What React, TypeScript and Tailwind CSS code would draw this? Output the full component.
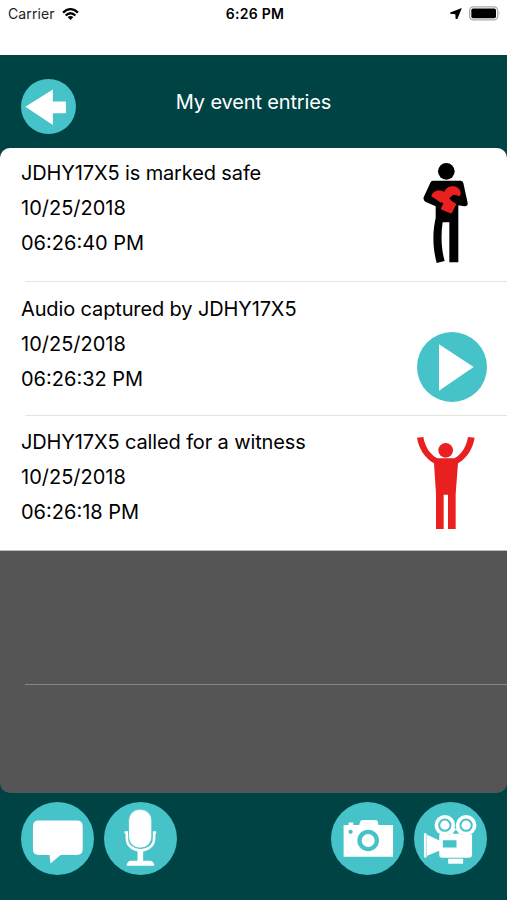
import React from 'react';

function BackIcon() {
  return (
    <svg viewBox="0 0 164 164" className="w-[55px] h-[55px]">
      <circle cx="82" cy="82" r="82" fill="#45c3c9" />
      <path d="M13 83 L95 31 V67 H134 V102 H95 V137 Z" fill="#fff" />
    </svg>
  );
}

function SafeIcon() {
  return (
    <svg viewBox="51 37 210 306" className="w-[70px] h-[102px]">
      <circle cx="139" cy="65" r="25" fill="#000" />
      <path d="M99 93 H182 Q188 93 190 100 L203 160 Q204 171 193 170 L175 167 V338 H148 V218 H128 C122 255 124 300 134 334 L110 340 C98 295 97 248 107 205 V170 L76 156 Q69 151 71 143 L91 99 Q93 93 99 93 Z" fill="#000" />
      <path d="M94 140 C97 122 121 118 133 127 C139 105 176 103 182 127 C183 139 177 143 171 137 L160 135 L148 146 L154 153 L169 163 L156 189 Q153 192 149 190 L122 179 L130 160 L120 158 L103 146 Z" fill="#e8201f" />
    </svg>
  );
}

function PlayIcon() {
  return (
    <svg viewBox="51 37 210 210" className="w-[70px] h-[70px]">
      <circle cx="156" cy="142" r="105" fill="#45c3c9" />
      <path d="M117 74 L221 142 L117 213 Z" fill="#fff" />
    </svg>
  );
}

function WitnessIcon() {
  return (
    <svg viewBox="51 37 210 279" className="w-[70px] h-[93px]" fill="#e8201f">
      <circle cx="137" cy="77" r="22" />
      <path d="M51 39 L70 37 C75 65 89 89 112 101 H163 C186 89 199 65 204 37 L224 39 C218 73 202 99 174 116 L167 208 V313 H144 V210 H131 V313 H108 V208 L102 116 C74 99 57 73 51 39 Z" />
    </svg>
  );
}

function MessageIcon() {
  return (
    <svg viewBox="62 66 220 220" className="w-[73px] h-[73px]">
      <circle cx="172" cy="176" r="110" fill="#45c3c9" />
      <path d="M115 122 H230 Q248 122 248 140 V208 Q248 226 230 226 H181 L151 251 L148 226 H115 Q98 226 98 208 V140 Q98 122 115 122 Z" fill="#fff" />
    </svg>
  );
}

function MicIcon() {
  return (
    <svg viewBox="311 66 220 220" className="w-[73px] h-[73px]">
      <circle cx="421" cy="176" r="110" fill="#45c3c9" />
      <path d="M373 158 H380 V175 C380 224 462 224 462 175 V158 H468" fill="none" stroke="#fff" strokeWidth="8" />
      <rect x="385" y="88" width="70" height="117" rx="34" fill="#fff" stroke="#45c3c9" strokeWidth="2.5" />
      <path d="M412 209 H429 V243 H452 Q461 246 463 258 H379 Q380 247 389 243 H412 Z" fill="#fff" />
    </svg>
  );
}

function CameraIcon() {
  return (
    <svg viewBox="42 66 220 220" className="w-[73px] h-[73px]">
      <circle cx="152" cy="176" r="110" fill="#45c3c9" />
      <path d="M80 135 H95 V128 H109 V135 H127 L130 125 Q132 120 137 120 H177 Q182 120 183 125 L185 135 H229 V231 H80 Z" fill="#fff" />
      <circle cx="101" cy="156" r="6.5" fill="#45c3c9" />
      <circle cx="154" cy="182" r="26" fill="#fff" stroke="#45c3c9" strokeWidth="13" />
    </svg>
  );
}

function VideoIcon() {
  return (
    <svg viewBox="291 66 220 220" className="w-[73px] h-[73px]">
      <circle cx="401" cy="176" r="110" fill="#45c3c9" />
      <g fill="#fff">
        <circle cx="384" cy="136" r="31" />
        <circle cx="448" cy="136" r="31" />
        <path d="M367 164 H466 V224 Q466 234 456 234 H376 Q367 234 367 225 V213 L329 229 V233 H321 V160 H329 V164 L367 182 Z" />
        <path d="M400 146 H432 V168 H400 Z" />
        <rect x="394" y="237" width="45" height="15" />
      </g>
      <path d="M417 149 L427 162 H407 Z M378 181 H419 V203 H378 Z" fill="#45c3c9" />
      <path d="M328 163 V230" stroke="#45c3c9" strokeWidth="1.5" />
      <g fill="#fff" stroke="#45c3c9" strokeWidth="6">
        <circle cx="384" cy="136" r="17" />
        <circle cx="448" cy="136" r="17" />
      </g>
    </svg>
  );
}

export default function App() {
  const entries = [
    {
      title: "JDHY17X5 is marked safe",
      date: "10/25/2018",
      time: "06:26:40 PM",
      icon: <SafeIcon />,
      textClass: "pt-2",
      iconClass: "pt-[14px]",
    },
    {
      title: "Audio captured by JDHY17X5",
      date: "10/25/2018",
      time: "06:26:32 PM",
      icon: <PlayIcon />,
      textClass: "pt-[10px]",
      iconClass: "pt-[50px]",
    },
    {
      title: "JDHY17X5 called for a witness",
      date: "10/25/2018",
      time: "06:26:18 PM",
      icon: <WitnessIcon />,
      textClass: "pt-[9px]",
      iconClass: "pt-[21px]",
    },
  ];

  return (
    <div className="flex h-[900px] w-[507px] flex-col overflow-hidden bg-[#004344] font-['Inter',sans-serif]">
      {/* Status Bar */}
      <div className="h-[55px] shrink-0 bg-white">
        <div className="grid h-[27px] grid-cols-3 items-center pl-2 pr-[6px] text-black">
          <div className="flex items-center gap-[7px]">
            <span className="text-[14px] tracking-[0.1px] text-[#222]">Carrier</span>
            <svg viewBox="0 0 50 37" className="h-[12px] w-[17px]">
              <g fill="none" stroke="#000" strokeWidth="7">
                <path d="M2 14 Q25 -7 48 14" />
                <path d="M10 23 Q25 9 40 23" />
              </g>
              <path d="M16 28 Q25 21 34 28 L25 37 Z" />
            </svg>
          </div>
          <span className="whitespace-nowrap pl-px text-center text-[14px] font-semibold tracking-[0.3px]">6:26 PM</span>
          <div className="flex items-center justify-end gap-[7px]">
            <svg viewBox="0 0 34 32" className="h-[11px] w-[12px]">
              <path d="M34 0 L21 32 L16 32 L15 18 L0 17 L0 13 Z" />
            </svg>
            <svg viewBox="0 0 96 44" className="h-[15px] w-[32px]">
              <rect x="2" y="2" width="84" height="39" rx="11" fill="#fff" stroke="#aaa" strokeWidth="4" />
              <rect x="7" y="7" width="74" height="29" rx="5" />
              <path d="M90 15 Q95 21 90 28 Z" fill="#aaa" />
            </svg>
          </div>
        </div>
      </div>

      {/* Header */}
      <header className="grid h-[93px] shrink-0 grid-cols-[1fr_auto_1fr] items-start px-[21px] text-white">
        <div className="pt-6">
          <BackIcon />
        </div>
        <h1 className="pt-[33px] text-[20px] leading-7 tracking-[-0.15px]">My event entries</h1>
      </header>

      {/* Event List */}
      <main className="h-[645px] shrink-0 overflow-hidden rounded-[10px] bg-[#555]">
        {entries.map((entry, index) => (
          <section key={entry.time} className="h-[134px] bg-white pl-[21px] text-black">
            <div className="flex h-[133px] justify-between pr-5">
              <div className={`text-[20px] leading-[34.8px] ${entry.textClass}`}>
                <p className="tracking-[-0.13px]">{entry.title}</p>
                <p>{entry.date}</p>
                <p>{entry.time}</p>
              </div>
              <div className={entry.iconClass}>{entry.icon}</div>
            </div>
            {index < 2 && <div className="ml-1 h-px bg-[#e4e4e4]" />}
          </section>
        ))}
        <div className="h-px bg-[#bbb]" />
        <div className="ml-[25px] h-[134px] border-b border-[#888]" />
      </main>

      {/* Capture Buttons */}
      <footer className="flex justify-between pl-[21px] pr-5 pt-[9px]">
        <div className="flex gap-[10px]">
          <button aria-label="Message"><MessageIcon /></button>
          <button aria-label="Audio"><MicIcon /></button>
        </div>
        <div className="flex gap-[10px]">
          <button aria-label="Photo"><CameraIcon /></button>
          <button aria-label="Video"><VideoIcon /></button>
        </div>
      </footer>
    </div>
  );
}
